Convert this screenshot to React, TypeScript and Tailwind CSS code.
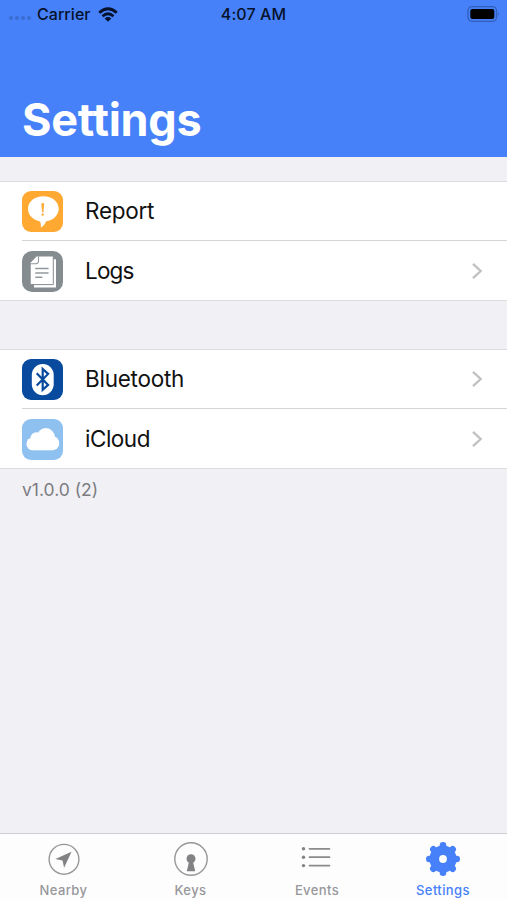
import type { ReactNode } from "react";
import clsx from "clsx";

interface SettingItem {
  label: string;
  icon: ReactNode;
  chevron: boolean;
  labelClass: string;
}

const ReportIcon = () => (
  <svg viewBox="0 0 41 41" className="size-[41px] shrink-0">
    <rect width="41" height="41" rx="9" fill="#ffa832" />
    <path d="M21.400 5.200c8.700 0 15.300 5.400 15.300 12.600 0 6.500-5.600 11.700-12.800 12.600-.8 2.500-2.300 4.600-5 6.100.2-2.100-.1-4.100-.7-6.100C11.200 29.200 6 24.300 6 17.800 6 10.600 12.700 5.200 21.400 5.200Z" fill="#fff" />
    <path d="M19.300 12.300h2.900l-.8 9h-1.300Z" fill="#ffa832" />
    <circle cx="20.700" cy="23.600" r="1.200" fill="#ffa832" />
  </svg>
);

const LogsIcon = () => (
  <svg viewBox="0 0 41 41" className="size-[41px] shrink-0">
    <rect width="41" height="41" rx="10" fill="#848c90" />
    <path d="M12 8.300h22v28.200H12Z" fill="#fff" />
    <path d="M14.500 5H31.300v28.600H8.200v-22Z" fill="#fff" stroke="#848c90" strokeWidth="1" />
    <path d="M16.500 5.500v4.700q-.3 2.600-2.900 2.600H8.700" fill="none" stroke="#92999c" strokeWidth="1.100" />
    <path d="M13.800 17.500h12.200M13.800 22.100h12.200M13.800 26.300h6" stroke="#92999c" strokeWidth="1.500" strokeLinecap="round" />
  </svg>
);

const BluetoothIcon = () => (
  <svg viewBox="0 0 41 41" className="size-[41px] shrink-0">
    <rect width="41" height="41" rx="9" fill="#084a9e" />
    <rect x="9.800" y="5" width="21.900" height="31.300" rx="10.950" fill="#fff" />
    <path d="m14.700 14.300 11.400 11.600-5.400 4.900V10l5.400 4.900-11.400 11.600" fill="none" stroke="#084a9e" strokeWidth="2.200" />
  </svg>
);

const CloudIcon = () => (
  <svg viewBox="0 0 41 41" className="size-[41px] shrink-0">
    <rect width="41" height="41" rx="9" fill="#8fc1f0" />
    <g fill="#fff">
      <circle cx="23.800" cy="18" r="9" />
      <circle cx="14.300" cy="19.200" r="5.900" />
      <circle cx="10.800" cy="24.900" r="6.400" />
      <circle cx="30.100" cy="24.100" r="7.200" />
      <path d="M10.800 20h19.300v11.300H10.800Z" />
    </g>
  </svg>
);

const groups: SettingItem[][] = [
  [
    { label: "Report", icon: <ReportIcon />, chevron: false, labelClass: "tracking-[-0.25px]" },
    { label: "Logs", icon: <LogsIcon />, chevron: true, labelClass: "tracking-[-0.8px]" },
  ],
  [
    { label: "Bluetooth", icon: <BluetoothIcon />, chevron: true, labelClass: "tracking-[-0.25px]" },
    { label: "iCloud", icon: <CloudIcon />, chevron: true, labelClass: "tracking-[-0.5px]" },
  ],
];

const NearbyIcon = () => (
  <svg viewBox="0 0 36 36" className="size-9">
    <circle cx="18" cy="18.300" r="14.900" fill="none" stroke="currentColor" strokeWidth="1.400" />
    <path d="m25.500 10.800-7.400 16-1.600-7.200-7.100-1.500Z" fill="#828284" />
  </svg>
);

const KeysIcon = () => (
  <svg viewBox="0 0 36 36" className="size-9">
    <circle cx="18" cy="18" r="16.200" fill="none" stroke="currentColor" strokeWidth="1.400" />
    <circle cx="18" cy="17.700" r="4.500" fill="#828284" />
    <path d="M16.200 20h3.600l2.400 10.300h-8.400Z" fill="#828284" />
  </svg>
);

const EventsIcon = () => (
  <svg viewBox="0 0 36 36" className="size-9">
    {[7.800, 16.200, 24.600].map((y) => (
      <g key={y}>
        <circle cx="4.500" cy={y} r="1.700" fill="#828284" />
        <path d={`M10.500 ${y}h20`} stroke="#8b8b8d" strokeWidth="1.700" strokeLinecap="round" />
      </g>
    ))}
  </svg>
);

const GearIcon = () => (
  <svg viewBox="0 0 36 36" className="size-9">
    {[0, 45, 90, 135].map((angle) => (
      <path key={angle} d="M18 4.300v27.400" stroke="currentColor" strokeWidth="6.600" strokeLinecap="round" transform={`rotate(${angle} 18 18)`} />
    ))}
    <circle cx="18" cy="18" r="8.700" fill="none" stroke="currentColor" strokeWidth="9.800" />
    <circle cx="18" cy="18" r="3.900" fill="#fdfdfe" />
  </svg>
);

const tabs = [
  { label: "Nearby", icon: <NearbyIcon />, active: false },
  { label: "Keys", icon: <KeysIcon />, active: false },
  { label: "Events", icon: <EventsIcon />, active: false },
  { label: "Settings", icon: <GearIcon />, active: true },
];

function StatusBar() {
  return (
    <div className="grid h-7 grid-cols-3 items-center text-base font-medium text-[#06112b]">
      <div className="flex items-center pl-[9px]">
        <div className="mt-2 flex gap-[2px]">
          {[0, 1, 2, 3].map((i) => (
            <span key={i} className="size-1 rounded-full bg-[#3b6dd3]" />
          ))}
        </div>
        <span className="ml-[6px] tracking-[0.05px]">Carrier</span>
        <svg viewBox="0 0 20 15" className="ml-[7px] h-[15px] w-5">
          <g fill="none" stroke="#06112b" strokeWidth="2.800">
            <path d="M1.200 5.700Q10-2.300 18.800 5.700" />
            <path d="M4.500 9.200Q10 4.200 15.500 9.200" />
          </g>
          <path d="M6.700 11.400Q10 8.600 13.300 11.400L10 14.800Z" fill="#06112b" />
        </svg>
      </div>
      <span className="text-center tracking-[0.1px]">4:07 AM</span>
      <div className="flex justify-end pr-[7px]">
        <svg viewBox="0 0 33 16" className="h-4 w-[33px]">
          <rect x="1" y=".7" width="28.500" height="14.600" rx="4" fill="none" stroke="#315eb8" strokeWidth="1.300" />
          <rect x="3.300" y="3" width="24" height="10" rx="2" fill="#000" />
          <path d="M31 5.700q1.800 2.300 0 4.600Z" fill="#315eb8" />
        </svg>
      </div>
    </div>
  );
}

function SettingsRow({ item, first }: { item: SettingItem; first: boolean }) {
  return (
    <div className="flex pl-[22px]">
      <div className={clsx("flex flex-1 items-center pr-6", first ? "h-[58px]" : "h-[60px] border-t border-[#d5d5d8] pt-px")}>
        {item.icon}
        <span className={clsx("ml-[22px] flex-1 text-[22.500px] leading-7 text-[#111]", item.labelClass)}>{item.label}</span>
        {item.chevron && (
          <svg viewBox="0 0 12 18" className="h-[18px] w-3">
            <path d="m2 1.800 7.700 7.200L2 16.200" fill="none" stroke="#c1c1c4" strokeWidth="2.300" />
          </svg>
        )}
      </div>
    </div>
  );
}

export default function App() {
  return (
    <div className="flex h-[900px] w-[507px] flex-col overflow-hidden bg-[#f0f0f5] font-['Inter','Liberation_Sans',sans-serif]">
      <header className="flex h-[157px] shrink-0 flex-col justify-between bg-[#4681f9]">
        <StatusBar />
        <h1 className="pb-[9px] pl-[22px] text-[45px] font-bold leading-[56px] tracking-[-0.25px] text-white">Settings</h1>
      </header>

      <main className="flex flex-1 flex-col pt-6">
        <div className="flex flex-col gap-12">
          {groups.map((items, g) => (
            <section key={g} className="border-y border-[#dcdcdf] bg-white">
              {items.map((item, i) => (
                <SettingsRow key={item.label} item={item} first={i === 0} />
              ))}
            </section>
          ))}
        </div>
        <p className="pl-[22px] pt-[9px] text-[17.500px] leading-6 text-[#7c7c81]">v1.0.0 (2)</p>
      </main>

      <nav className="grid h-[67px] shrink-0 grid-cols-[127px_127px_126px_126px] border-t border-[#cfcfd3] bg-[#fdfdfe]">
        {tabs.map((tab) => (
          <div key={tab.label} className={clsx("flex flex-col items-center pt-[7px]", tab.active ? "text-[#4681f9]" : "text-[#97979a]")}>
            {tab.icon}
            <span className="mt-[5px] text-[13px] font-medium leading-4 tracking-[0.400px]">{tab.label}</span>
          </div>
        ))}
      </nav>
    </div>
  );
}
